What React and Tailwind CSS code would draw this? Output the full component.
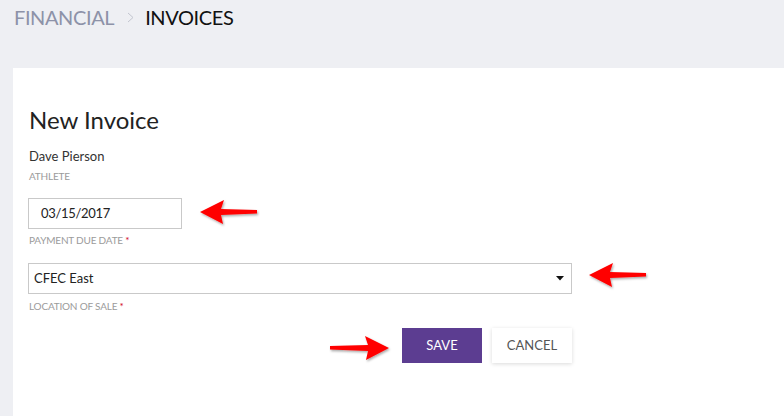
import React from 'react'

function Arrow({ className, points }) {
  return (
    <svg className={className} width="70" height="34" viewBox="0 0 70 34">
      <defs>
        <filter id="ash" x="-20%" y="-30%" width="140%" height="160%">
          <feDropShadow dx="1" dy="1.5" stdDeviation="1" floodColor="#000" floodOpacity="0.35" />
        </filter>
      </defs>
      <polygon points={points} fill="#ff0000" filter="url(#ash)" />
    </svg>
  )
}

// left-pointing arrow, tip at (4,17)
const LEFT = '4,17 28,5 25,14 61,15 61,18.5 25,20 27,29'
// right-pointing arrow, tip at (66,17)
const RIGHT = '66,17 42,5 45,14 7,15 7,18.5 45,20 43,29'

export default function App() {
  return (
    <div
      className="relative w-[784px] h-[416px] overflow-hidden bg-[#eeeff3]"
      style={{ fontFamily: 'Lato, "Liberation Sans", sans-serif' }}
    >
      <div className="h-[68px] pl-[14px] pt-[7px]">
        <div className="flex items-center text-[20px] leading-none tracking-[-0.4px]">
          <span className="text-[#8d92a8]">FINANCIAL</span>
          <svg className="ml-[13px] mr-[11px]" width="7" height="11" viewBox="0 0 7 11">
            <path d="M1 1 L6 5.5 L1 10" fill="none" stroke="#c3c6d0" strokeWidth="1" />
          </svg>
          <span className="text-[#111]">INVOICES</span>
        </div>
      </div>

      <div className="ml-[13px] h-[348px] bg-white pl-[15px] pt-[40px]">
        <div className="w-[544px]">
          <h1 className="text-[24px] leading-none text-[#222] pl-[1px]">New Invoice</h1>

          <div className="mt-[17px] text-[13px] leading-[14px] text-[#333] pl-[1px]">Dave Pierson</div>
          <div className="mt-[8px] text-[10px] leading-none tracking-[-0.2px] text-[#9b9b9b] pl-[1px]">ATHLETE</div>

          <div className="mt-[17px] w-[154px] h-[31px] border border-[#c9c9c9] flex items-center pl-[12px] text-[13px] tracking-[-0.3px] text-[#222]">
            03/15/2017
          </div>
          <div className="mt-[6px] text-[10px] leading-none tracking-[-0.2px] text-[#9b9b9b] pl-[1px]">
            PAYMENT DUE DATE <span className="text-[#d0021b]">*</span>
          </div>

          <div className="mt-[18px] h-[31px] border border-[#c9c9c9] flex items-center justify-between pl-[5px] pr-[7px] text-[13px] text-[#222]">
            <span>CFEC East</span>
            <svg width="8" height="5" viewBox="0 0 8 5">
              <polygon points="0,0 8,0 4,4.5" fill="#111" />
            </svg>
          </div>
          <div className="mt-[7px] text-[10px] leading-none tracking-[-0.2px] text-[#9b9b9b] pl-[1px]">
            LOCATION OF SALE <span className="text-[#d0021b]">*</span>
          </div>

          <div className="mt-[17px] flex justify-end gap-[10px]">
            <button className="w-[80px] h-[35px] bg-[#5c3d91] text-white text-[13px]">SAVE</button>
            <button className="w-[80px] h-[35px] bg-white text-[#555] text-[13px] shadow-[0_1px_4px_rgba(0,0,0,0.15)]">
              CANCEL
            </button>
          </div>
        </div>
      </div>

      <Arrow className="absolute left-[196px] top-[195px]" points={LEFT} />
      <Arrow className="absolute left-[585px] top-[258px]" points={LEFT} />
      <Arrow className="absolute left-[323px] top-[331px]" points={RIGHT} />
    </div>
  )
}
